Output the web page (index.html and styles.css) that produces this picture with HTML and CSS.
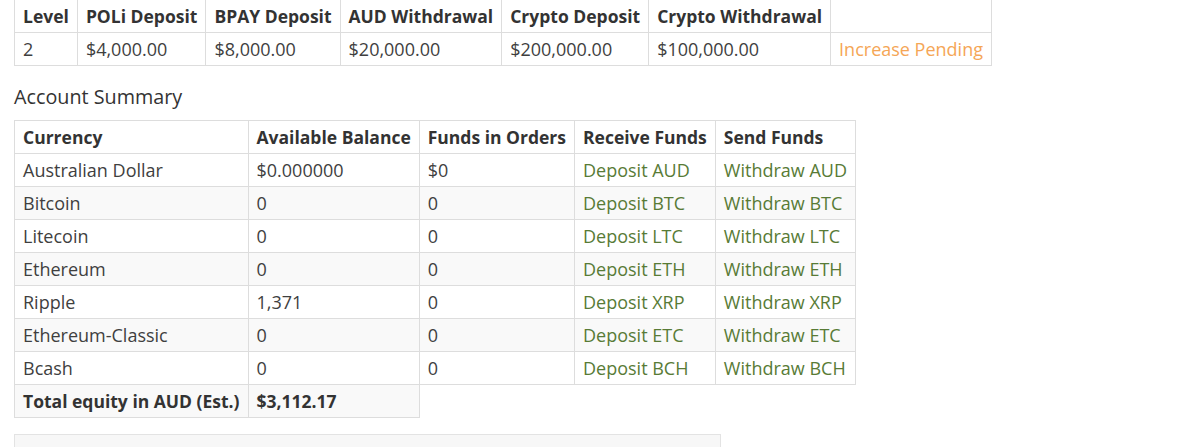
FILE: index.html
```html
<!DOCTYPE html>
<html>
<head>
<meta charset="utf-8">
<link rel="stylesheet" href="styles.css">
</head>
<body>
<div class="page">
  <table class="grid limits">
    <tr class="head">
      <th>Level</th><th>POLi Deposit</th><th>BPAY Deposit</th><th>AUD Withdrawal</th><th>Crypto Deposit</th><th>Crypto Withdrawal</th><th></th>
    </tr>
    <tr>
      <td>2</td><td>$4,000.00</td><td>$8,000.00</td><td>$20,000.00</td><td>$200,000.00</td><td>$100,000.00</td><td class="pending">Increase Pending</td>
    </tr>
  </table>

  <h3 class="title">Account Summary</h3>

  <table class="grid summary">
    <thead>
      <tr class="head">
        <th>Currency</th><th>Available Balance</th><th>Funds in Orders</th><th>Receive Funds</th><th>Send Funds</th>
      </tr>
    </thead>
    <tbody>
      <tr><td>Australian Dollar</td><td>$0.000000</td><td>$0</td><td class="link">Deposit AUD</td><td class="link">Withdraw AUD</td></tr>
      <tr><td>Bitcoin</td><td>0</td><td>0</td><td class="link">Deposit BTC</td><td class="link">Withdraw BTC</td></tr>
      <tr><td>Litecoin</td><td>0</td><td>0</td><td class="link">Deposit LTC</td><td class="link">Withdraw LTC</td></tr>
      <tr><td>Ethereum</td><td>0</td><td>0</td><td class="link">Deposit ETH</td><td class="link">Withdraw ETH</td></tr>
      <tr><td>Ripple</td><td>1,371</td><td>0</td><td class="link">Deposit XRP</td><td class="link">Withdraw XRP</td></tr>
      <tr><td>Ethereum-Classic</td><td>0</td><td>0</td><td class="link">Deposit ETC</td><td class="link">Withdraw ETC</td></tr>
      <tr><td>Bcash</td><td>0</td><td>0</td><td class="link">Deposit BCH</td><td class="link">Withdraw BCH</td></tr>
      <tr class="total"><th>Total equity in AUD (Est.)</th><th>$3,112.17</th></tr>
    </tbody>
  </table>

  <div class="well"></div>
</div>
</body>
</html>
```

FILE: styles.css
```css
html, body {
  margin: 0;
  padding: 0;
  background: #fff;
}
body {
  font-family: "Open Sans", "Liberation Sans", sans-serif;
  font-size: 18px;
  color: #333;
}
.page {
  padding: 0 0 0 14px;
}
.grid {
  border-collapse: collapse;
  border-spacing: 0;
}
.grid th,
.grid td {
  border: 1px solid #ddd;
  padding: 6px 8px;
  line-height: 20px;
  text-align: left;
  white-space: nowrap;
}
.grid th {
  font-size: 17.5px;
  font-weight: 700;
  color: #333;
}
.grid td {
  font-size: 18px;
  color: #3f3f3f;
}
.limits {
  margin-top: -1px;
}
.pending {
  color: #f5a656 !important;
}
.title {
  font-size: 19.75px;
  font-weight: 400;
  color: #333;
  margin: 18px 0 11px;
  line-height: 25px;
}
.summary tbody tr:nth-child(odd) {
  background: #fff;
}
.summary tbody tr:nth-child(even) {
  background: #f9f9f9;
}
.link {
  color: #587b36 !important;
}
.well {
  margin-top: 16px;
  width: 705px;
  height: 30px;
  background: #f7f7f7;
  border: 1px solid #e3e3e3;
}
```
